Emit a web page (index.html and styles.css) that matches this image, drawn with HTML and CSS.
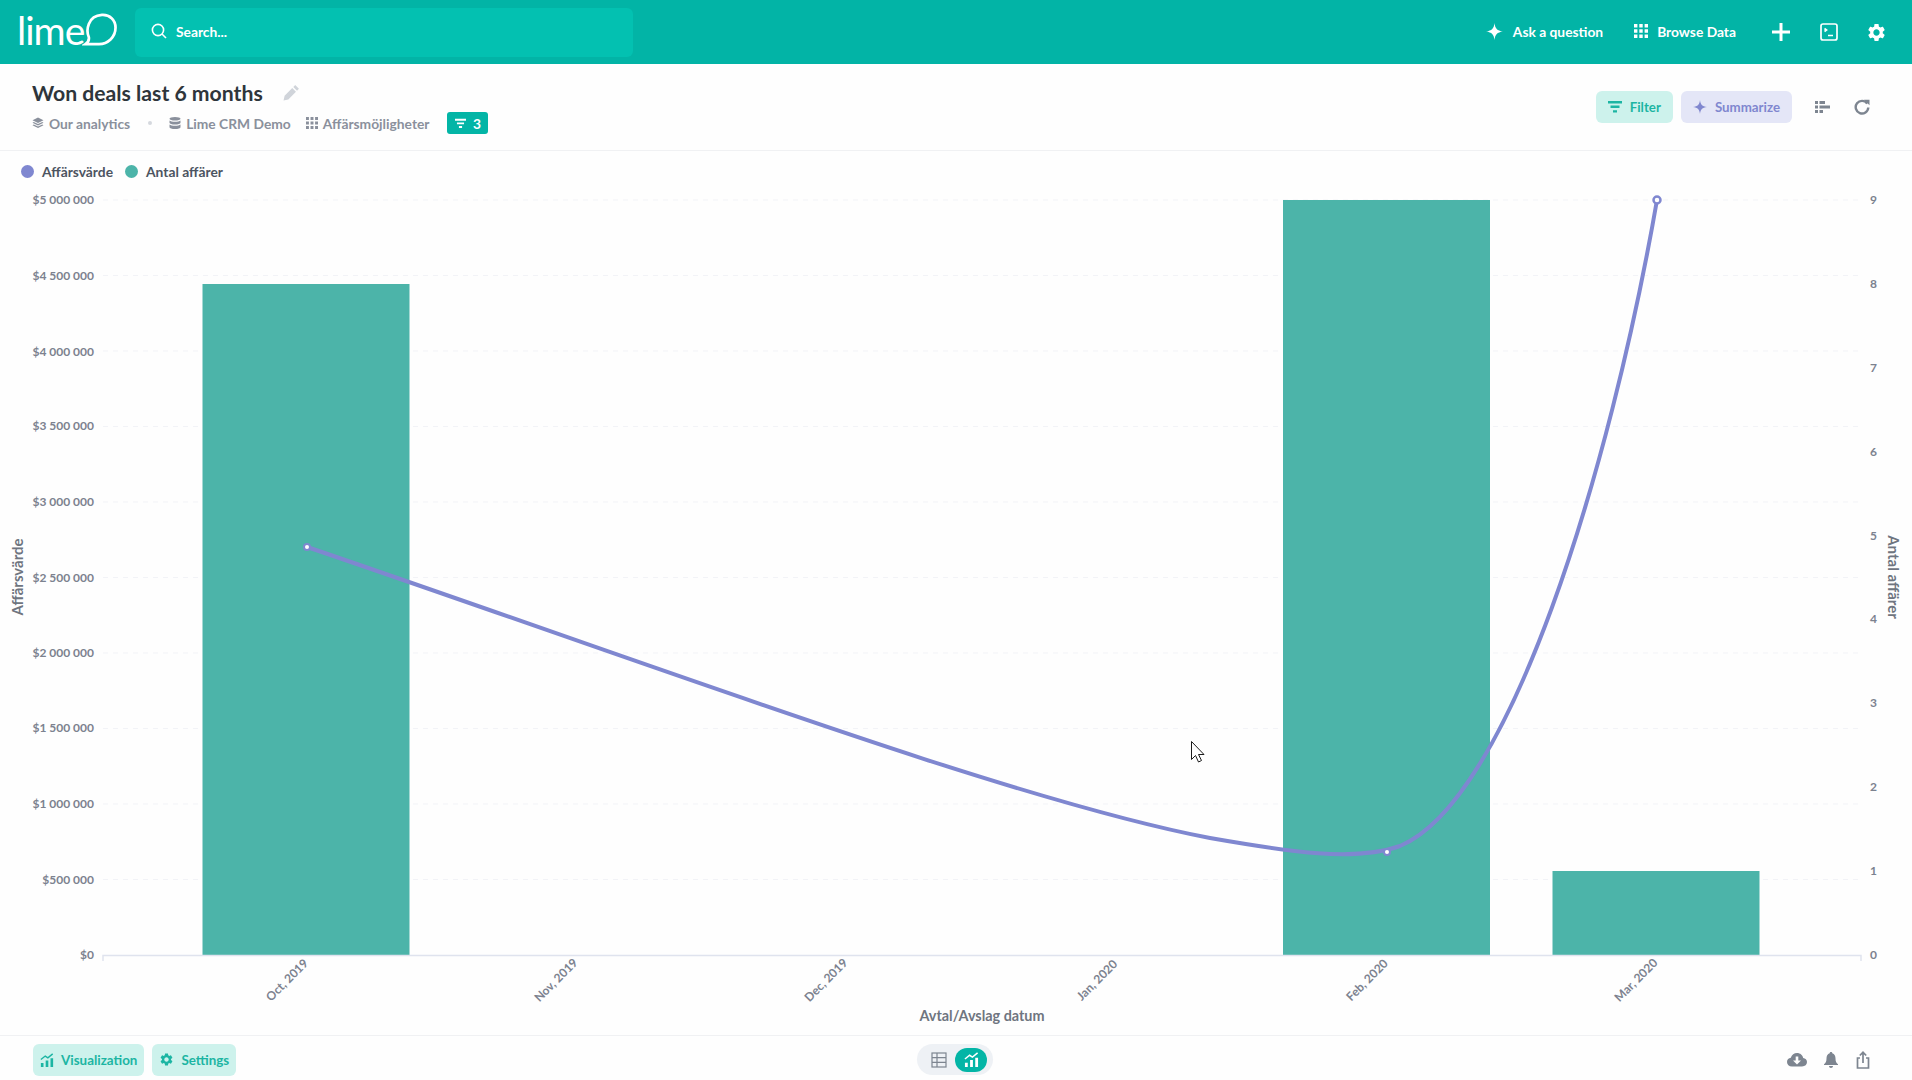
FILE: index.html
```html
<!DOCTYPE html>
<html lang="en">
<head>
    <meta charset="UTF-8">
    <title>Won deals last 6 months</title>
    <link rel="stylesheet" href="styles.css">
</head>
<body>
    <svg class="icon-defs" width="0" height="0">
        <symbol id="i-spark" viewBox="0 0 16 16"><path d="M8 0c.5 5 2.500 7.300 8 8-5.500.7-7.500 3-8 8-.5-5-2.500-7.300-8-8 5.500-.7 7.500-3 8-8z"/></symbol>
        <symbol id="i-grid" viewBox="0 0 14 14"><path d="M0 0h3.400v3.400H0zM5.300 0h3.400v3.400H5.300zM10.600 0H14v3.400h-3.400zM0 5.300h3.400v3.400H0zM5.300 5.300h3.400v3.400H5.300zM10.600 5.300H14v3.400h-3.400zM0 10.600h3.400V14H0zM5.300 10.600h3.400V14H5.300zM10.600 10.600H14V14h-3.400z"/></symbol>
        <symbol id="i-gear" viewBox="0 0 24 24"><path d="M19.140 12.940c.04-.3.06-.61.06-.94 0-.32-.02-.64-.07-.94l2.030-1.580c.18-.14.23-.41.12-.61l-1.920-3.320c-.12-.22-.37-.29-.59-.22l-2.390.96c-.5-.38-1.030-.7-1.620-.94l-.36-2.540c-.04-.24-.24-.41-.48-.41h-3.840c-.24 0-.43.17-.47.41l-.36 2.540c-.59.24-1.130.57-1.620.94l-2.390-.96c-.22-.08-.47 0-.59.22L2.740 8.870c-.12.21-.08.47.12.61l2.030 1.580c-.05.3-.09.63-.09.94s.02.64.07.94l-2.030 1.580c-.18.14-.23.41-.12.61l1.920 3.320c.12.22.37.29.59.22l2.390-.96c.5.38 1.030.7 1.620.94l.36 2.540c.05.24.24.41.48.41h3.840c.24 0 .44-.17.47-.41l.36-2.540c.59-.24 1.130-.56 1.620-.94l2.390.96c.22.08.47 0 .59-.22l1.920-3.320c.12-.22.07-.47-.12-.61l-2.010-1.580zM12 15.600c-1.980 0-3.600-1.620-3.600-3.600s1.620-3.600 3.600-3.600 3.600 1.620 3.600 3.600-1.620 3.600-3.600 3.600z"/></symbol>
        <symbol id="i-filter" viewBox="0 0 14 12"><path d="M0 0h14v2.400H0zM2.500 4.600h9V7h-9zM5 9.200h4v2.400H5z"/></symbol>
        <symbol id="i-db" viewBox="0 0 12 12"><path d="M6 0c3 0 5.500.7 5.500 1.800S9 3.600 6 3.600.5 2.900.5 1.800 3 0 6 0zM.5 3.500C1.500 4.400 3.500 4.800 6 4.800s4.500-.4 5.500-1.300v2.300C11.500 6.900 9 7.600 6 7.600S.5 6.900.5 5.800zM.5 7.500C1.500 8.400 3.500 8.800 6 8.800s4.500-.4 5.500-1.300v2.700C11.500 11.300 9 12 6 12S.5 11.300.5 10.200z"/></symbol>
        <symbol id="i-layers" viewBox="0 0 12 12"><path d="M6 .5l5.500 2.700L6 5.900.5 3.200zM1.800 5L6 7.100 10.200 5l1.300.7L6 8.400.5 5.700zM1.800 7.500 6 9.600l4.200-2.100 1.300.7L6 10.900.5 8.200z"/></symbol>
        <symbol id="i-chart" viewBox="0 0 16 16"><path d="M1 11.500h3V16H1zM6.500 8.500h3V16h-3zM12 6h3v10h-3z"/><path d="M1 7.500 6 3.500l3 2L14.500 1" fill="none" stroke="currentColor" stroke-width="1.600"/></symbol>
    </svg>

    <header class="navbar">
        <a class="logo">
            <span class="logo-text">lime</span>
            <svg class="logo-mark" viewBox="0 0 36 34"><path d="M3 32c3-2 4-4 3.500-7C3.500 18 5 3 20 2c8-.5 14 5 14 13 0 10-8 17-17 17z" fill="none" stroke="#fff" stroke-width="2.800"/></svg>
        </a>
        <div class="search">
            <svg class="search-icon" viewBox="0 0 16 16"><circle cx="7" cy="7" r="5.600"/><path d="M11 11l4 4"/></svg>
            <span>Search...</span>
        </div>
        <nav class="nav-actions">
            <a class="nav-link ask"><svg class="ic-16"><use href="#i-spark"/></svg>Ask a question</a>
            <a class="nav-link browse"><svg class="ic-14"><use href="#i-grid"/></svg>Browse Data</a>
            <svg class="nav-plus" viewBox="0 0 18 18"><path d="M7.500 0h3v7.500H18v3h-7.500V18h-3v-7.500H0v-3h7.500z"/></svg>
            <svg class="nav-term" viewBox="0 0 18 18"><rect x="1" y="1" width="16" height="16" rx="2"/><path d="M4.500 5.500l2 1.500-2 1.500M8 12.500h5"/></svg>
            <svg class="nav-gear"><use href="#i-gear"/></svg>
        </nav>
    </header>

    <section class="question-head">
        <div class="question-info">
            <div class="title-row">
                <h1>Won deals last 6 months</h1>
                <svg class="pencil" viewBox="0 0 16 16"><path d="M11.500 1l3.500 3.500-1.800 1.800-3.500-3.500zM8.700 3.800l3.500 3.500L5 14.500l-4.500 1 1-4.500z"/></svg>
            </div>
            <div class="crumbs">
                <span class="crumb"><svg class="ic-12"><use href="#i-layers"/></svg>Our analytics</span>
                <span class="crumb-dot"></span>
                <span class="crumb"><svg class="ic-12"><use href="#i-db"/></svg>Lime CRM Demo</span>
                <span class="crumb table"><svg class="ic-12"><use href="#i-grid"/></svg>Affärsmöjligheter</span>
                <span class="filter-badge"><svg class="ic-11"><use href="#i-filter"/></svg>3</span>
            </div>
        </div>
        <div class="question-actions">
            <a class="btn btn-filter"><svg class="ic-14"><use href="#i-filter"/></svg>Filter</a>
            <a class="btn btn-summarize"><svg class="ic-13"><use href="#i-spark"/></svg>Summarize</a>
            <svg class="sort-icon" viewBox="0 0 15 12"><path d="M0 0h3v3H0zM4.500 0H10v3H4.500zM0 4.500h3v3H0zM4.500 4.500H15v3H4.500zM0 9h3v3H0zM4.500 9H8v3H4.500z"/></svg>
            <svg class="refresh-icon" viewBox="0 0 16 16"><path class="arc" d="M13.200 4.600A6.300 6.300 0 1 0 14.300 8.500"/><path class="tip" d="M10 .8h5.500v5.500z"/></svg>
        </div>
    </section>

    <main class="chart-wrap">
        <div class="legend">
            <span class="legend-item"><i class="dot dot-line"></i>Affärsvärde</span>
            <span class="legend-item"><i class="dot dot-bar"></i>Antal affärer</span>
        </div>
        <svg class="chart" viewBox="0 190 1912 845">
            <g class="grid">
                <path d="M103 200H1861"/><path d="M103 275.500H1861"/><path d="M103 351H1861"/><path d="M103 426.500H1861"/>
                <path d="M103 502H1861"/><path d="M103 577.500H1861"/><path d="M103 653H1861"/><path d="M103 728.500H1861"/>
                <path d="M103 804H1861"/><path d="M103 879.500H1861"/>
            </g>
            <g class="bars">
                <rect x="202.500" y="284" width="207" height="671"/>
                <rect x="1283" y="200" width="207" height="755"/>
                <rect x="1552.500" y="871" width="207" height="84"/>
            </g>
            <path class="axis" d="M103 961V955.500H1861V961"/>
            <g class="tick tick-left">
                <text x="94" y="204">$5 000 000</text>
                <text x="94" y="280">$4 500 000</text>
                <text x="94" y="356">$4 000 000</text>
                <text x="94" y="430">$3 500 000</text>
                <text x="94" y="506">$3 000 000</text>
                <text x="94" y="582">$2 500 000</text>
                <text x="94" y="657">$2 000 000</text>
                <text x="94" y="732">$1 500 000</text>
                <text x="94" y="808">$1 000 000</text>
                <text x="94" y="884">$500 000</text>
                <text x="94" y="959">$0</text>
            </g>
            <g class="tick tick-right">
                <text x="1870" y="204">9</text>
                <text x="1870" y="288">8</text>
                <text x="1870" y="372">7</text>
                <text x="1870" y="456">6</text>
                <text x="1870" y="540">5</text>
                <text x="1870" y="623">4</text>
                <text x="1870" y="707">3</text>
                <text x="1870" y="791">2</text>
                <text x="1870" y="875">1</text>
                <text x="1870" y="959">0</text>
            </g>
            <g class="tick tick-x">
                <text transform="translate(290 983) rotate(-45)">Oct, 2019</text>
                <text transform="translate(559 983) rotate(-45)">Nov, 2019</text>
                <text transform="translate(829 983) rotate(-45)">Dec, 2019</text>
                <text transform="translate(1100 983) rotate(-45)">Jan, 2020</text>
                <text transform="translate(1370 983) rotate(-45)">Feb, 2020</text>
                <text transform="translate(1639 983) rotate(-45)">Mar, 2020</text>
            </g>
            <text class="axis-title x-title" x="982" y="1021">Avtal/Avslag datum</text>
            <text class="axis-title" transform="translate(23 577) rotate(-90)">Affärsvärde</text>
            <text class="axis-title" transform="translate(1888 577) rotate(90)">Antal affärer</text>
            <path class="line" d="M307 547C640 660 1010 800 1210 838C1290 852 1355 862 1400 846C1510 800 1610 470 1657 200"/>
            <circle class="point-small" cx="307" cy="547" r="3"/>
            <circle class="point-small" cx="1387" cy="852" r="3"/>
            <circle class="point-end" cx="1657" cy="200" r="3.500"/>
            <path class="cursor" d="M1191.500 741.500V759.500L1195.500 755.500L1198.500 762L1201.500 760.500L1198.500 754.500H1204z"/>
        </svg>
    </main>

    <footer class="footer-bar">
        <div class="footer-left">
            <a class="btn btn-filter"><svg class="ic-14"><use href="#i-chart"/></svg>Visualization</a>
            <a class="btn btn-filter"><svg class="ic-15"><use href="#i-gear"/></svg>Settings</a>
        </div>
        <div class="view-toggle">
            <svg class="toggle-table" viewBox="0 0 16 16"><rect x="1" y="1" width="14" height="14"/><path d="M1 5.700h14M1 10.300h14M6 1v14"/></svg>
            <span class="toggle-chart"><svg class="ic-15"><use href="#i-chart"/></svg></span>
        </div>
        <div class="footer-right">
            <svg class="foot-icon" viewBox="0 0 20 16"><path fill-rule="evenodd" d="M5 14.500C2 14.500 0 12.600 0 10c0-2.300 1.700-4 3.800-4.200C4.700 2.900 7.200 1 10 1c3.200 0 5.700 2.200 6.200 5 2.200.3 3.800 1.900 3.800 4.100 0 2.600-2 4.400-5 4.400zM8.700 4.500v4H6l4 4 4-4h-2.700v-4z"/></svg>
            <svg class="foot-icon bell" viewBox="0 0 14 16"><path d="M7 0c.8 0 1.300.5 1.300 1.300C10.600 2 11.500 4 11.500 6.500c0 3 .8 4.300 2.500 5.800v.7H0v-.7c1.700-1.500 2.500-2.800 2.500-5.800C2.500 4 3.400 2 5.700 1.300 5.700.5 6.200 0 7 0zM5 14h4c0 1.200-.9 2-2 2s-2-.8-2-2z"/></svg>
            <svg class="foot-share" viewBox="0 0 14 18"><path d="M4 7H1.500v10h11V7H10M7 12V1.500M3.800 4.500 7 1.300l3.200 3.200"/></svg>
        </div>
    </footer>
</body>
</html>
```

FILE: styles.css
```css
* {
    box-sizing: border-box;
}
html, body {
    margin: 0;
    height: 100%;
}
body {
    display: flex;
    flex-direction: column;
    height: 1080px;
    overflow: hidden;
    background-color: #fefefe;
    font-family: Lato, "Open Sans", sans-serif;
    font-weight: 700;
    font-size: 13.8px;
    color: #4c5461;
}
svg {
    display: block;
    flex: none;
    fill: currentColor;
}
.icon-defs {
    position: absolute;
}
.ic-11 { width: 11px; height: 11px; }
.ic-12 { width: 12px; height: 12px; }
.ic-13 { width: 14px; height: 14px; }
.ic-14 { width: 14px; height: 14px; }
.ic-15 { width: 15px; height: 15px; }
.ic-16 { width: 17px; height: 17px; }

/* top bar */
.navbar {
    display: flex;
    align-items: center;
    height: 64px;
    padding-left: 17px;
    background-color: #02b4a6;
    color: #fff;
}
.logo {
    display: flex;
    align-items: center;
    width: 118px;
}
.logo-text {
    font-size: 39px;
    font-weight: 400;
    line-height: 1;
    margin-top: -4px;
    letter-spacing: -1px;
}
.logo-mark {
    width: 36px;
    height: 33px;
    margin-left: -2px;
    margin-top: -6px;
}
.search {
    display: flex;
    align-items: center;
    width: 498px;
    height: 49px;
    padding: 0 0 2px 16px;
    gap: 9px;
    background-color: #03c1b1;
    border-radius: 6px;
}
.search-icon {
    width: 16px;
    height: 16px;
    fill: none;
    stroke: #fff;
    stroke-width: 1.6;
}
.nav-actions {
    display: flex;
    align-items: center;
    margin-left: auto;
    padding-right: 25px;
}
.nav-link {
    display: flex;
    align-items: center;
    gap: 9px;
    padding-bottom: 2px;
}
.ask {
    gap: 10px;
}
.browse {
    margin-left: 31px;
}
.nav-plus {
    width: 18px;
    height: 18px;
    margin-left: 36px;
}
.nav-term {
    width: 18px;
    height: 18px;
    margin-left: 30px;
    fill: none;
    stroke: #fff;
    stroke-width: 1.7;
}
.nav-gear {
    width: 21px;
    height: 21px;
    margin-left: 28px;
}

/* question header */
.question-head {
    display: flex;
    align-items: center;
    justify-content: space-between;
    height: 87px;
    padding: 0 42px 0 32px;
    border-bottom: 1px solid #f0f1f3;
}
.title-row {
    display: flex;
    align-items: center;
    gap: 20px;
}
h1 {
    margin: 0;
    font-size: 21.2px;
    font-weight: 700;
    line-height: 28px;
    color: #2e353b;
}
.pencil {
    width: 17px;
    height: 17px;
    color: #d0d4da;
    margin-top: -2px;
}
.crumbs {
    display: flex;
    align-items: center;
    height: 22px;
    margin: 5px 0 1px;
    color: #8a909c;
}
.crumb {
    display: flex;
    align-items: center;
    gap: 5px;
}
.crumb-dot {
    width: 4px;
    height: 4px;
    margin: 0 17px 0 18px;
    border-radius: 50%;
    background-color: #d5d8de;
}
.crumb.table {
    margin-left: 15px;
}
.filter-badge {
    display: flex;
    align-items: center;
    justify-content: center;
    gap: 7px;
    width: 41px;
    height: 22px;
    margin-left: 18px;
    border-radius: 3px;
    background-color: #03b5a6;
    color: #fff;
}
.question-actions {
    display: flex;
    align-items: center;
    gap: 8px;
    margin-top: -1px;
}
.btn {
    display: flex;
    align-items: center;
    gap: 8px;
    height: 32px;
    padding: 0 12px;
    border-radius: 6px;
    font-size: 13.3px;
}
.btn-filter {
    background-color: #cdf2ec;
    color: #1cb5a3;
}
.btn-summarize {
    background-color: #e4e6f7;
    color: #8087cf;
}
.sort-icon {
    width: 15px;
    height: 12px;
    margin-left: 15px;
    color: #7d8590;
}
.refresh-icon {
    width: 16px;
    height: 16px;
    margin-left: 16px;
    color: #7d8590;
}
.refresh-icon .arc {
    fill: none;
    stroke: currentColor;
    stroke-width: 2.4;
}

/* chart */
.chart-wrap {
    flex: 1;
    display: flex;
    flex-direction: column;
}
.legend {
    display: flex;
    align-items: center;
    gap: 12px;
    height: 39px;
    padding: 1px 0 0 21px;
}
.legend-item {
    display: flex;
    align-items: center;
    gap: 8px;
}
.dot {
    width: 13px;
    height: 13px;
    border-radius: 50%;
}
.dot-line {
    background-color: #7f87d0;
}
.dot-bar {
    background-color: #4cb4a9;
}
.chart {
    width: 1912px;
    height: 845px;
    color: #7c828f;
}
.grid path {
    fill: none;
    stroke: #f2f3f7;
    stroke-dasharray: 5 5;
}
.bars rect {
    fill: #4cb4a9;
}
.axis {
    fill: none;
    stroke: #dfe3ee;
    stroke-width: 1.5;
}
.tick text {
    font-size: 12px;
    fill: #7c828f;
}
.tick-left text {
    text-anchor: end;
}
.tick-x text {
    text-anchor: middle;
}
.axis-title {
    font-size: 15px;
    fill: #6f7580;
    text-anchor: middle;
}
.x-title {
    font-size: 14.4px;
}
.line {
    fill: none;
    stroke: #7f87d0;
    stroke-width: 4;
}
.point-small {
    fill: #fff;
    stroke: #7f87d0;
    stroke-width: 2;
}
.point-end {
    fill: #fff;
    stroke: #7f87d0;
    stroke-width: 2.5;
}
.cursor {
    fill: #fff;
    stroke: #1c1c1c;
    stroke-width: 1;
}

/* footer */
.footer-bar {
    display: flex;
    align-items: center;
    height: 45px;
    padding: 3px 42px 0 33px;
    border-top: 1px solid #f0f1f3;
}
.footer-left {
    display: flex;
    gap: 8px;
}
.footer-left .btn {
    padding: 0 7px;
    gap: 7px;
    font-size: 13.4px;
}
.view-toggle {
    display: flex;
    align-items: center;
    gap: 8px;
    height: 31px;
    margin-left: 681px;
    padding: 0 6px 0 14px;
    border-radius: 16px;
    background-color: #eef1f5;
}
.toggle-table {
    width: 16px;
    height: 16px;
    fill: none;
    stroke: #7d8590;
    stroke-width: 1.2;
}
.toggle-chart {
    display: flex;
    align-items: center;
    justify-content: center;
    width: 32px;
    height: 24px;
    border-radius: 12px;
    background-color: #03b5a6;
    color: #fff;
}
.footer-right {
    display: flex;
    align-items: center;
    gap: 17px;
    margin-left: auto;
    color: #7d8590;
}
.foot-icon {
    width: 20px;
    height: 16px;
}
.foot-icon.bell {
    width: 14px;
}
.foot-share {
    width: 14px;
    height: 18px;
    margin-left: 1px;
    fill: none;
    stroke: currentColor;
    stroke-width: 1.7;
}
```
